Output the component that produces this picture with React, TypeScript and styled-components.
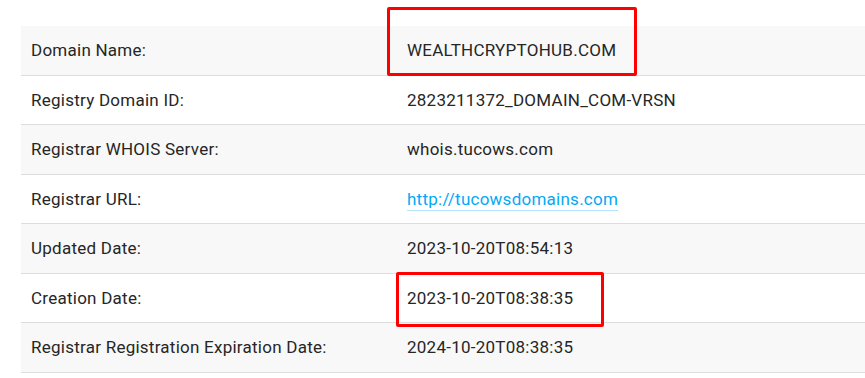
import React from 'react';
import styled, { createGlobalStyle } from 'styled-components';

const GlobalStyle = createGlobalStyle`
  html, body {
    margin: 0;
    padding: 0;
    background: #fff;
    overflow: hidden;
  }
  body {
    font-family: Roboto, "Liberation Sans", Arial, sans-serif;
  }
`;

type Entry = {
  label: string;
  value: string;
  link?: boolean;
};

const entries: Entry[] = [
  { label: 'Domain Name:', value: 'WEALTHCRYPTOHUB.COM' },
  { label: 'Registry Domain ID:', value: '2823211372_DOMAIN_COM-VRSN' },
  { label: 'Registrar WHOIS Server:', value: 'whois.tucows.com' },
  { label: 'Registrar URL:', value: 'http://tucowsdomains.com', link: true },
  { label: 'Updated Date:', value: '2023-10-20T08:54:13' },
  { label: 'Creation Date:', value: '2023-10-20T08:38:35' },
  { label: 'Registrar Registration Expiration Date:', value: '2024-10-20T08:38:35' },
];

const App = () => {
  return (
    <Page>
      <GlobalStyle />
      <Table>
        {entries.map((e, i) => (
          <Row key={e.label} $striped={i % 2 === 0}>
            <Label>{e.label}</Label>
            <Value>{e.link ? <Link href="#">{e.value}</Link> : e.value}</Value>
          </Row>
        ))}
      </Table>
      <Highlight $left={387} $top={7} $width={250} $height={69} />
      <Highlight $left={396} $top={272} $width={208} $height={55} />
    </Page>
  );
};
export default App;

const Page = styled.div`
  position: relative;
  width: 865px;
  height: 378px;
  padding: 26px 0 0 21px;
  box-sizing: border-box;
`;

const Table = styled.div`
  display: flex;
  flex-direction: column;
  width: 100%;
`;

const Row = styled.div<{ $striped: boolean }>`
  display: grid;
  grid-template-columns: 376px 1fr;
  align-items: center;
  height: 49.5px;
  box-sizing: border-box;
  border-bottom: 1px solid #dddddd;
  background: ${(p) => (p.$striped ? '#f8f8f8' : '#ffffff')};
  font-size: 17px;
  letter-spacing: 0.25px;
  color: #262626;
`;

const Label = styled.div`
  padding-left: 10px;
  white-space: nowrap;
`;

const Value = styled.div`
  padding-left: 10px;
  white-space: nowrap;
`;

const Link = styled.a`
  color: #03a9f4;
  text-decoration: none;
  border-bottom: 1px solid #b3e5fc;
  padding-bottom: 1px;
`;

const Highlight = styled.div<{ $left: number; $top: number; $width: number; $height: number }>`
  position: absolute;
  left: ${(p) => p.$left}px;
  top: ${(p) => p.$top}px;
  width: ${(p) => p.$width}px;
  height: ${(p) => p.$height}px;
  box-sizing: border-box;
  border: 3px solid #ff0000;
  border-radius: 2px;
`;
